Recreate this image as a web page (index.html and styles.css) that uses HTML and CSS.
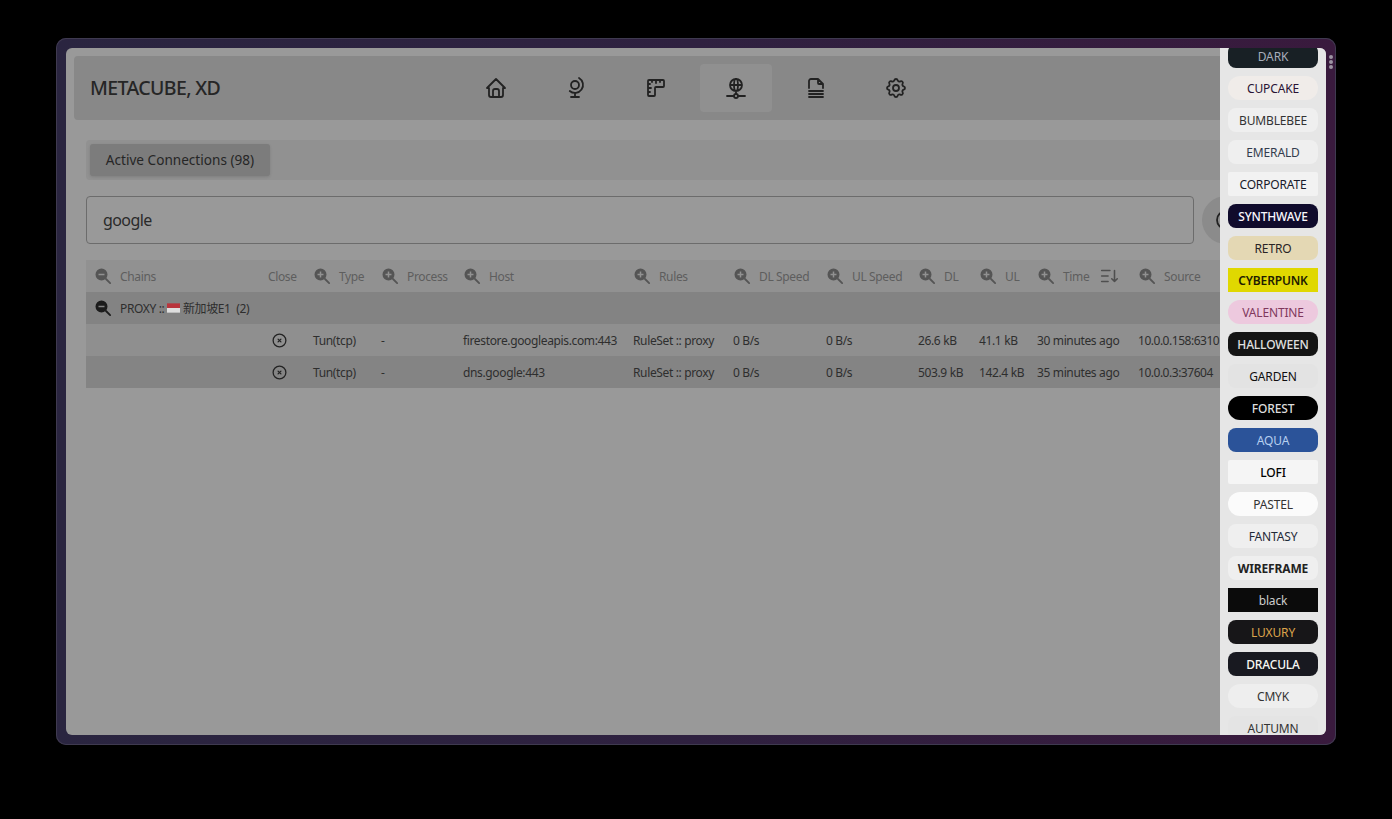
FILE: index.html
```html
<!DOCTYPE html>
<html lang="en">
<head>
<meta charset="utf-8">
<title>MetaCube XD</title>
<link rel="stylesheet" href="styles.css">
</head>
<body>
<svg class="defs" width="0" height="0" aria-hidden="true">
  <symbol id="zi" viewBox="0 0 24 24"><path fill-rule="evenodd" fill="currentColor" d="M10 2a8 8 0 1 1 0 16a8 8 0 0 1 0 -16zM9 6v3H6v2h3v3h2v-3h3V9h-3V6z"/><path d="M16 16l5.5 5.5" fill="none" stroke="currentColor" stroke-width="2.4" stroke-linecap="round"/></symbol>
  <symbol id="zo" viewBox="0 0 24 24"><path fill-rule="evenodd" fill="currentColor" d="M10 2a8 8 0 1 1 0 16a8 8 0 0 1 0 -16zM6 9v2h8V9z"/><path d="M16 16l5.5 5.5" fill="none" stroke="currentColor" stroke-width="2.4" stroke-linecap="round"/></symbol>
  <symbol id="cx" viewBox="0 0 24 24"><path d="M3 12a9 9 0 1 0 18 0a9 9 0 0 0 -18 0M10 10l4 4m0 -4l-4 4"/></symbol>
</svg>
<div class="frame">
  <div class="inner">
    <main class="main">
      <header class="nav">
        <div class="title">METACUBE, XD</div>
        <a class="nav-item"><svg class="nav-icon" viewBox="0 0 24 24"><path d="M5 12l-2 0l9 -9l9 9l-2 0M5 12v7a2 2 0 0 0 2 2h10a2 2 0 0 0 2 -2v-7M9 21v-6a2 2 0 0 1 2 -2h2a2 2 0 0 1 2 2v6"/></svg></a>
        <a class="nav-item"><svg class="nav-icon" viewBox="0 0 24 24"><path d="M7 9a4 4 0 1 0 8 0a4 4 0 0 0 -8 0M5.75 15a8.015 8.015 0 1 0 9.25 -13M11 17v4M7 21h8"/></svg></a>
        <a class="nav-item"><svg class="nav-icon" viewBox="0 0 24 24"><path d="M5 4h14a1 1 0 0 1 1 1v5a1 1 0 0 1 -1 1h-7a1 1 0 0 0 -1 1v7a1 1 0 0 1 -1 1h-5a1 1 0 0 1 -1 -1v-14a1 1 0 0 1 1 -1M4 8l2 0M4 12l3 0M4 16l2 0M8 4l0 2M12 4l0 3M16 4l0 2"/></svg></a>
        <a class="nav-item active"><svg class="nav-icon" viewBox="0 0 24 24"><path d="M6 9a6 6 0 1 0 12 0a6 6 0 0 0 -12 0M12 3c1.333 .333 2 2.333 2 6s-.667 5.667 -2 6M12 3c-1.333 .333 -2 2.333 -2 6s.667 5.667 2 6M6 9h12M3 20h7M14 20h7M10 20a2 2 0 1 0 4 0a2 2 0 0 0 -4 0M12 15v3"/></svg></a>
        <a class="nav-item"><svg class="nav-icon" viewBox="0 0 24 24"><path d="M14 3v4a1 1 0 0 0 1 1h4M5 12v-7a2 2 0 0 1 2 -2h7l5 5v4M5 21h14M5 18h14M5 15h14"/></svg></a>
        <a class="nav-item"><svg class="nav-icon" viewBox="0 0 24 24"><path d="M10.325 4.317c.426 -1.756 2.924 -1.756 3.35 0a1.724 1.724 0 0 0 2.573 1.066c1.543 -.94 3.31 .826 2.37 2.37a1.724 1.724 0 0 0 1.065 2.572c1.756 .426 1.756 2.924 0 3.35a1.724 1.724 0 0 0 -1.066 2.573c.94 1.543 -.826 3.31 -2.37 2.37a1.724 1.724 0 0 0 -2.572 1.065c-.426 1.756 -2.924 1.756 -3.35 0a1.724 1.724 0 0 0 -2.573 -1.066c-1.543 .94 -3.31 -.826 -2.37 -2.37a1.724 1.724 0 0 0 -1.065 -2.572c-1.756 -.426 -1.756 -2.924 0 -3.35a1.724 1.724 0 0 0 1.066 -2.573c-.94 -1.543 .826 -3.31 2.37 -2.37c1 .608 2.296 .07 2.572 -1.065M9 12a3 3 0 1 0 6 0a3 3 0 0 0 -6 0"/></svg></a>
      </header>
      <section class="content">
        <div class="tabs"><button class="tab">Active Connections (98)</button></div>
        <div class="search-row">
          <div class="search">google</div>
          <button class="round"><svg class="nav-icon" viewBox="0 0 24 24"><path d="M3 12a9 9 0 1 0 18 0a9 9 0 0 0 -18 0"/></svg></button>
        </div>
        <table class="conn">
          <colgroup>
            <col class="c1"><col class="c2"><col class="c3"><col class="c4"><col class="c5"><col class="c6"><col class="c7"><col class="c8"><col class="c9"><col class="c10"><col class="c11"><col class="c12">
          </colgroup>
          <thead>
            <tr class="head">
              <th><span class="th"><svg class="zoom"><use href="#zo"/></svg>Chains</span></th>
              <th><span class="th">Close</span></th>
              <th><span class="th"><svg class="zoom"><use href="#zi"/></svg>Type</span></th>
              <th><span class="th"><svg class="zoom"><use href="#zi"/></svg>Process</span></th>
              <th><span class="th"><svg class="zoom"><use href="#zi"/></svg>Host</span></th>
              <th><span class="th"><svg class="zoom"><use href="#zi"/></svg>Rules</span></th>
              <th><span class="th"><svg class="zoom"><use href="#zi"/></svg>DL Speed</span></th>
              <th><span class="th"><svg class="zoom"><use href="#zi"/></svg>UL Speed</span></th>
              <th><span class="th"><svg class="zoom"><use href="#zi"/></svg>DL</span></th>
              <th><span class="th"><svg class="zoom"><use href="#zi"/></svg>UL</span></th>
              <th><span class="th"><svg class="zoom"><use href="#zi"/></svg>Time<svg class="sort" viewBox="0 0 24 24"><path d="M4 6l9 0M4 12l7 0M4 18l7 0M15 15l3 3l3 -3M18 6l0 12"/></svg></span></th>
              <th><span class="th"><svg class="zoom"><use href="#zi"/></svg>Source</span></th>
            </tr>
          </thead>
          <tbody>
            <tr class="group">
              <td colspan="12"><span class="th"><svg class="zoom dark"><use href="#zo"/></svg>PROXY ::&nbsp;<svg class="flag" viewBox="0 0 14 10"><rect width="14" height="5" fill="#b9343c"/><rect y="5" width="14" height="5" fill="#dedede"/></svg>&nbsp;新加坡E1&nbsp;&nbsp;(2)</span></td>
            </tr>
            <tr class="row odd">
              <td></td>
              <td class="close"><svg class="x"><use href="#cx"/></svg></td>
              <td>Tun(tcp)</td><td>-</td><td>firestore.googleapis.com:443</td><td>RuleSet :: proxy</td><td>0 B/s</td><td>0 B/s</td><td>26.6 kB</td><td>41.1 kB</td><td>30 minutes ago</td><td class="src">10.0.0.158:63101</td>
            </tr>
            <tr class="row even">
              <td></td>
              <td class="close"><svg class="x"><use href="#cx"/></svg></td>
              <td>Tun(tcp)</td><td>-</td><td>dns.google:443</td><td>RuleSet :: proxy</td><td>0 B/s</td><td>0 B/s</td><td>503.9 kB</td><td>142.4 kB</td><td>35 minutes ago</td><td class="src">10.0.0.3:37604</td>
            </tr>
          </tbody>
        </table>
      </section>
    </main>
    <aside class="drawer">
      <div class="themes">
        <div class="t t-dark">DARK</div>
        <div class="t t-cupcake">CUPCAKE</div>
        <div class="t t-bumblebee">BUMBLEBEE</div>
        <div class="t t-emerald">EMERALD</div>
        <div class="t t-corporate">CORPORATE</div>
        <div class="t t-synthwave">SYNTHWAVE</div>
        <div class="t t-retro">RETRO</div>
        <div class="t t-cyberpunk">CYBERPUNK</div>
        <div class="t t-valentine">VALENTINE</div>
        <div class="t t-halloween">HALLOWEEN</div>
        <div class="t t-garden">GARDEN</div>
        <div class="t t-forest">FOREST</div>
        <div class="t t-aqua">AQUA</div>
        <div class="t t-lofi">LOFI</div>
        <div class="t t-pastel">PASTEL</div>
        <div class="t t-fantasy">FANTASY</div>
        <div class="t t-wireframe">WIREFRAME</div>
        <div class="t t-black">black</div>
        <div class="t t-luxury">LUXURY</div>
        <div class="t t-dracula">DRACULA</div>
        <div class="t t-cmyk">CMYK</div>
        <div class="t t-autumn">AUTUMN</div>
      </div>
    </aside>
    <div class="dots"><i></i><i></i><i></i></div>
  </div>
</div>
</body>
</html>
```
FILE: styles.css
```css
* { box-sizing: border-box; }
html, body { margin: 0; height: 100%; }
body {
  background: #000;
  padding: 38px 56px;
  font-family: "Noto Sans", "Noto Sans CJK SC", sans-serif;
  overflow: hidden;
}
.defs { position: absolute; }
.frame {
  height: 707px;
  padding: 10px;
  border-radius: 10px;
  background: linear-gradient(90deg, #2a2540 0%, #2f2140 50%, #391a3d 100%);
  box-shadow: inset 0 0 0 1px #3f3a50;
}
.inner {
  position: relative;
  height: 100%;
  border-radius: 6px;
  background: #999;
}
.main { height: 100%; padding: 8px; overflow: hidden; border-radius: 6px; }
.nav {
  display: flex;
  align-items: center;
  gap: 8px;
  height: 64px;
  padding: 0 16px;
  background: #888;
  border-radius: 4px;
}
.title {
  flex: 0 0 362px;
  padding-bottom: 2px;
  font-size: 19.5px;
  letter-spacing: -.62px;
  font-weight: 500;
  color: #262626;
  white-space: nowrap;
}
.nav-item {
  flex: 0 0 72px;
  height: 48px;
  display: flex;
  align-items: center;
  justify-content: center;
  border-radius: 4px;
}
.nav-item.active { background: #909090; }
.nav-icon {
  width: 24px;
  height: 24px;
  fill: none;
  stroke: #222;
  stroke-width: 1.8;
  stroke-linecap: round;
  stroke-linejoin: round;
}
.content { padding: 20px 12px 0; }
.tabs {
  height: 40px;
  padding: 4px;
  background: #919191;
  border-radius: 4px;
}
.tab {
  height: 32px;
  width: 180px;
  padding: 0 0 2px;
  border: 0;
  border-radius: 3px;
  background: #7c7c7c;
  box-shadow: 0 1px 3px rgba(0,0,0,.12);
  color: #262626;
  font: 400 13.6px "Noto Sans", sans-serif;
}
.search-row {
  display: flex;
  gap: 8px;
  margin-top: 16px;
}
.search {
  flex: 0 0 1108px;
  height: 48px;
  padding: 0 16px;
  line-height: 46px;
  font-size: 16px;
  letter-spacing: -.6px;
  color: #2a2a2a;
  border: 1px solid #6c6c6c;
  border-radius: 4px;
  background: #999;
}
.round {
  flex: 0 0 48px;
  height: 48px;
  padding: 0;
  border: 0;
  border-radius: 50%;
  display: flex;
  align-items: center;
  justify-content: center;
  background: #8b8b8b;
}
.conn {
  table-layout: fixed;
  width: 1200px;
  margin-top: 16px;
  border-collapse: separate;
  border-spacing: 0;
  font-size: 12px;
  letter-spacing: -.36px;
  color: #2e2e2e;
}
.c1 { width: 174px; }
.c2 { width: 45px; }
.c3 { width: 68px; }
.c4 { width: 82px; }
.c5 { width: 170px; }
.c6 { width: 100px; }
.c7 { width: 93px; }
.c8 { width: 92px; }
.c9 { width: 61px; }
.c10 { width: 58px; }
.c11 { width: 101px; }
.c12 { width: 156px; }
.conn th, .conn td {
  height: 32px;
  padding: 0 0 0 8px;
  font-weight: 400;
  text-align: left;
  white-space: nowrap;
  overflow: hidden;
}
.conn .src { letter-spacing: -.48px; }
.head { background: #919191; color: #5e5e5e; }
.group { background: #838383; }
.odd { background: #8f8f8f; }
.even { background: #848484; }
.th { display: flex; align-items: center; }
.zoom {
  width: 18px;
  height: 18px;
  margin-right: 8px;
  flex: none;
  color: #555;
}
.zoom.dark { color: #1c1c1c; }
.sort {
  width: 22px;
  height: 22px;
  margin-left: 9px;
  fill: none;
  stroke: #4f4f4f;
  stroke-width: 1.7;
  stroke-linecap: round;
  stroke-linejoin: round;
}
.flag { width: 13px; height: 10px; flex: none; }
.close { padding-left: 11px !important; }
.x {
  display: block;
  width: 17px;
  height: 17px;
  fill: none;
  stroke: #222;
  stroke-width: 1.8;
  stroke-linecap: round;
}
.drawer {
  position: absolute;
  top: 0;
  right: 0;
  bottom: 0;
  width: 106px;
  background: #e6e6e6;
  border-radius: 0 6px 6px 0;
  overflow: hidden;
}
.themes {
  display: flex;
  flex-direction: column;
  gap: 8px;
  margin-top: -4px;
  padding: 0 8px;
}
.t {
  flex: none;
  height: 24px;
  line-height: 25px;
  text-align: center;
  font-size: 12px;
  letter-spacing: -.15px;
  font-weight: 400;
  border-radius: 8px;
  background: #efefef;
  color: #333c4d;
}
.t-dark { background: #182025; color: #a6adbb; }
.t-cupcake { background: #f0ece9; color: #291334; border-radius: 12px; }
.t-bumblebee { color: #333; }
.t-corporate { background: #f2f2f2; color: #181a2a; border-radius: 2px; }
.t-synthwave { background: #100b2c; color: #f9f7fd; font-weight: 500; }
.t-retro { background: #e4d8b4; color: #282425; }
.t-cyberpunk { background: #e0d800; color: #1f1d00; border-radius: 0; font-weight: 600; }
.t-valentine { background: #edc9de; color: #80385d; border-radius: 12px; }
.t-halloween { background: #141414; color: #e0e0e0; font-weight: 500; }
.t-garden { background: #e3e3e3; color: #100f0f; }
.t-forest { background: #000; color: #ddd; border-radius: 12px; font-weight: 500; }
.t-aqua { background: #2b5399; color: #b7d0f0; }
.t-lofi { background: #f5f5f5; color: #000; border-radius: 2px; font-weight: 500; }
.t-pastel { background: #fbfbfb; color: #333; border-radius: 12px; }
.t-fantasy { color: #1f2937; }
.t-wireframe { color: #222; font-weight: 700; }
.t-black { background: #0b0b0b; color: #ccc; border-radius: 0; }
.t-luxury { background: #171618; color: #dca54c; }
.t-dracula { background: #181920; color: #f8f8f2; font-weight: 500; }
.t-cmyk { background: #eee; color: #333; border-radius: 12px; }
.t-autumn { background: #e4e4e4; color: #333; }
.dots {
  position: absolute;
  top: 7px;
  right: -7px;
  display: flex;
  flex-direction: column;
  gap: 1px;
}
.dots i {
  display: block;
  width: 4px;
  height: 4px;
  border-radius: 50%;
  background: #9d94a3;
}
```
